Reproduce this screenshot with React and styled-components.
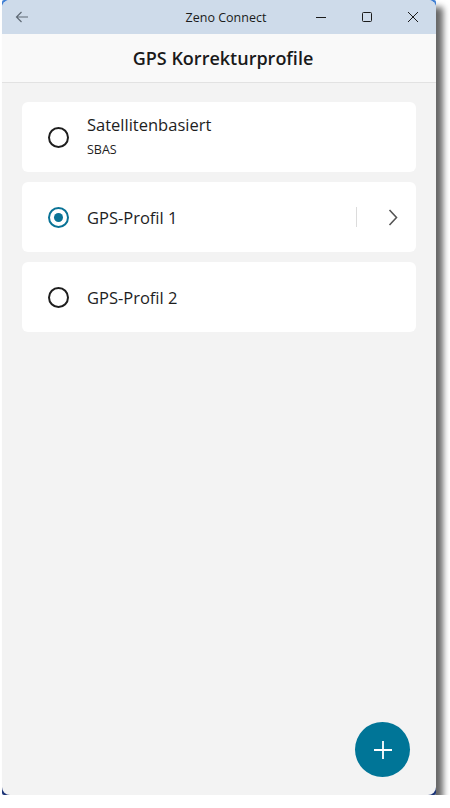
import React, { useState } from 'react';
import styled, { createGlobalStyle } from 'styled-components';

const GlobalStyle = createGlobalStyle`
  html, body {
    margin: 0;
    padding: 0;
    background: #ffffff;
    font-family: "Open Sans", "Noto Sans", sans-serif;
  }
`;

const Desk = styled.div`
  width: 434px;
  height: 795px;
  margin-left: 2px;
  background: linear-gradient(to bottom, #3f7fd4, #1c3477);
  border-radius: 2px;
  box-shadow: 7px 7px 6px rgba(0, 0, 0, 0.6);
`;

const Window = styled.div`
  position: relative;
  display: flex;
  flex-direction: column;
  width: 100%;
  height: 100%;
  border-radius: 8px;
  overflow: hidden;
  background: #f3f3f3;
`;

const TitleBar = styled.div`
  display: grid;
  grid-template-columns: 40px 1fr 138px;
  height: 34px;
  background: #cedbea;
  color: #1b1b1b;
`;

const IconButton = styled.div`
  display: flex;
  align-items: center;
  justify-content: center;
  width: ${p => p.$w || 46}px;
  height: 34px;
  color: ${p => p.$muted ? '#5f6a75' : '#1b1b1b'};
`;

const Caption = styled.div`
  display: flex;
`;

const WinTitle = styled.div`
  display: flex;
  align-items: center;
  justify-content: center;
  padding-left: 112px;
  font-size: 12.5px;
  color: #1b1b1b;
`;

const Header = styled.div`
  display: flex;
  align-items: center;
  justify-content: center;
  height: 48px;
  background: #f9f9f9;
  border-bottom: 1px solid #e2e2e2;
  font-size: 18px;
  font-weight: 600;
  color: #1a1a1a;
  padding-left: 8px;
`;

const List = styled.div`
  display: flex;
  flex-direction: column;
  gap: 10px;
  padding: 19px 20px;
`;

const Card = styled.div`
  display: flex;
  align-items: center;
  height: 70px;
  background: #ffffff;
  border-radius: 6px;
  padding-left: 26px;
  padding-right: 16px;
`;

const Radio = styled.div`
  box-sizing: border-box;
  flex: none;
  display: flex;
  align-items: center;
  justify-content: center;
  width: 21px;
  height: 21px;
  border-radius: 50%;
  border: 2px solid ${p => p.$checked ? '#0a7396' : '#1e1e1e'};

  &::after {
    content: '';
    display: ${p => p.$checked ? 'block' : 'none'};
    width: 9px;
    height: 9px;
    border-radius: 50%;
    background: #0a7396;
  }
`;

const Labels = styled.div`
  flex: 1;
  display: flex;
  flex-direction: column;
  gap: 6px;
  margin-left: 18px;
  margin-top: ${p => p.$twoLine ? '-3px' : '1px'};
  color: #1e1e1e;
`;

const Name = styled.div`
  font-size: 16.5px;
  line-height: 22px;
`;

const Sub = styled.div`
  font-size: 12.5px;
  line-height: 16px;
`;

const Divider = styled.div`
  width: 1px;
  height: 20px;
  background: #dcdcdc;
  margin-right: 31px;
`;

const Chevron = styled.div`
  display: flex;
  align-items: center;
  color: #555;
  margin-right: 2px;
`;

const Fab = styled.button`
  position: absolute;
  right: 26px;
  bottom: 18px;
  width: 55px;
  height: 55px;
  border: none;
  border-radius: 50%;
  background: #007597;
  display: flex;
  align-items: center;
  justify-content: center;
  padding: 0;
`;

const profiles = [
  { id: 'sbas', name: 'Satellitenbasiert', sub: 'SBAS' },
  { id: 'p1', name: 'GPS-Profil 1', more: true },
  { id: 'p2', name: 'GPS-Profil 2' },
];

export default function App() {
  const [selected, setSelected] = useState('p1');

  return (
    <>
      <GlobalStyle />
      <Desk>
        <Window>
          <TitleBar>
            <IconButton $w={40} $muted>
              <svg width="14" height="12" viewBox="0 0 14 12" fill="none" stroke="currentColor" strokeWidth="1.2">
                <path d="M13 6H1.5M6.5 1L1.5 6l5 5" />
              </svg>
            </IconButton>
            <WinTitle>Zeno Connect</WinTitle>
            <Caption>
              <IconButton>
                <svg width="12" height="12" viewBox="0 0 12 12" stroke="currentColor" strokeWidth="1">
                  <path d="M1 6.5h10" />
                </svg>
              </IconButton>
              <IconButton>
                <svg width="12" height="12" viewBox="0 0 12 12" fill="none" stroke="currentColor" strokeWidth="1">
                  <rect x="1.5" y="1.5" width="9" height="9" rx="1" />
                </svg>
              </IconButton>
              <IconButton>
                <svg width="12" height="12" viewBox="0 0 12 12" stroke="currentColor" strokeWidth="1">
                  <path d="M1 1l10 10M11 1L1 11" />
                </svg>
              </IconButton>
            </Caption>
          </TitleBar>
          <Header>GPS Korrekturprofile</Header>
          <List>
            {profiles.map(p => (
              <Card key={p.id} onClick={() => setSelected(p.id)}>
                <Radio $checked={selected === p.id} />
                <Labels $twoLine={!!p.sub}>
                  <Name>{p.name}</Name>
                  {p.sub && <Sub>{p.sub}</Sub>}
                </Labels>
                {p.more && (
                  <>
                    <Divider />
                    <Chevron>
                      <svg width="10" height="17" viewBox="0 0 10 17" fill="none" stroke="currentColor" strokeWidth="1.6">
                        <path d="M1.5 1l7 7.5-7 7.5" />
                      </svg>
                    </Chevron>
                  </>
                )}
              </Card>
            ))}
          </List>
          <Fab>
            <svg width="20" height="20" viewBox="0 0 20 20" stroke="#fff" strokeWidth="1.8">
              <path d="M10 1v18M1 10h18" />
            </svg>
          </Fab>
        </Window>
      </Desk>
    </>
  );
}
